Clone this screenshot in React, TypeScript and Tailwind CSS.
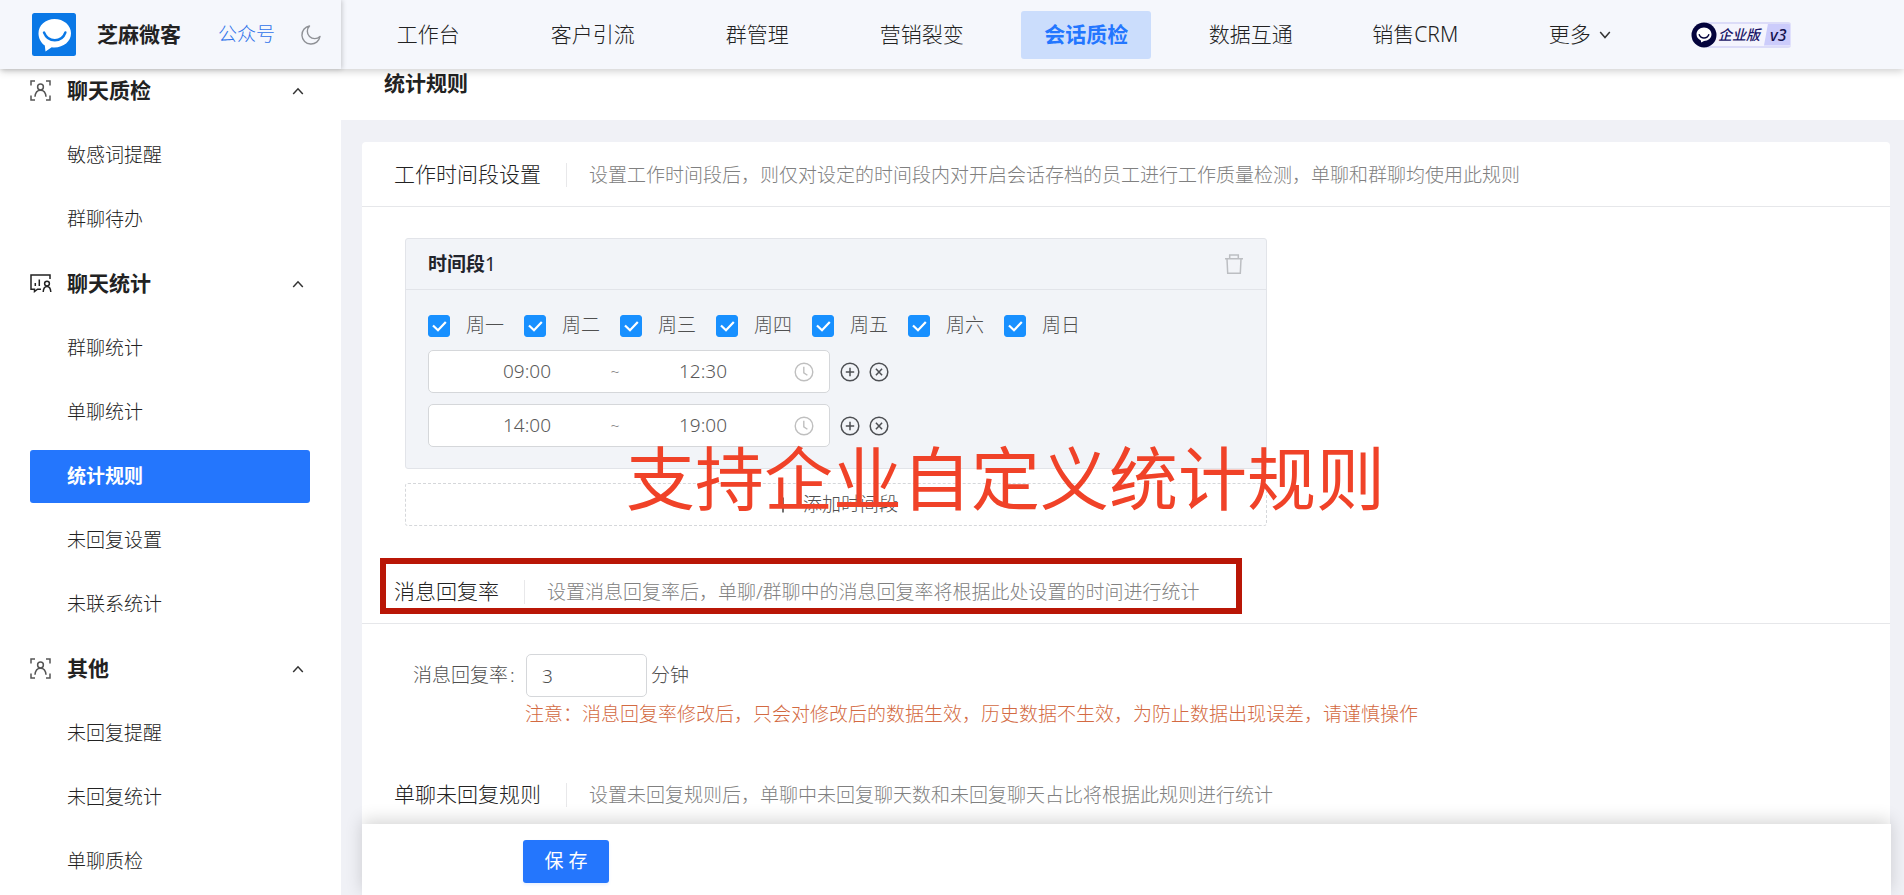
import { useState } from 'react';

type MenuGroup = { title: string; icon: 'scan' | 'stats'; items: string[] };

const navItems = ['工作台', '客户引流', '群管理', '营销裂变', '会话质检', '数据互通', '销售CRM'];

const menu: MenuGroup[] = [
  { title: '聊天质检', icon: 'scan', items: ['敏感词提醒', '群聊待办'] },
  { title: '聊天统计', icon: 'stats', items: ['群聊统计', '单聊统计', '统计规则', '未回复设置', '未联系统计'] },
  { title: '其他', icon: 'scan', items: ['未回复提醒', '未回复统计', '单聊质检'] },
];

const weekdays = ['周一', '周二', '周三', '周四', '周五', '周六', '周日'];

function Logo() {
  return (
    <svg viewBox="0 0 44 43" className="h-[43px] w-11 shrink-0" aria-hidden="true">
      <rect width="44" height="43" rx="2.5" fill="#0a78e6" />
      <path
        d="M22.5 6C31.6 6 39 12.2 39 20.3S31.6 34.5 22.5 34.5c-1 0-1.900 0-2.800-.2L13.500 38.500l-.7-6C9 29.800 6.500 25.500 6.500 20.500 6.500 12.400 13.400 6 22.500 6Z"
        fill="#fff"
      />
      <path d="M12 19.5c2 5 6 7.800 10.800 7.800s8.800-2.800 10.600-7.800" fill="none" stroke="#0a78e6" strokeWidth="2.4" strokeLinecap="round" />
    </svg>
  );
}

function MoonIcon() {
  return (
    <svg viewBox="0 0 20 20" className="size-5" fill="none" stroke="#8f9196" strokeWidth="1.4" strokeLinejoin="round" aria-hidden="true">
      <path d="M8.500 1A9.100 9.100 0 1 0 19 11.500 6.800 6.800 0 0 1 8.500 1Z" />
    </svg>
  );
}

function ScanUserIcon() {
  return (
    <svg viewBox="0 0 21 21" className="size-[21px]" fill="none" stroke="#555" strokeWidth="1.5" aria-hidden="true">
      <path d="M1 5.500V1h4M16 1h4v4.500M20 15.500V20h-4M5 20H1v-4.500" />
      <circle cx="10.5" cy="7" r="2.9" />
      <path d="M5 16.800c.3-3.800 2.300-6.600 5.500-6.600s5.200 2.800 5.500 6.600" />
    </svg>
  );
}

function StatsUserIcon() {
  return (
    <svg viewBox="0 0 22 19" className="h-[19px] w-[22px]" fill="none" stroke="#222" strokeWidth="1.5" aria-hidden="true">
      <path d="M20 5V1H1v14.200h3.500v2.300l3-2.300H11" />
      <path d="M5.300 9v3M9.300 5.500V12" />
      <circle cx="17" cy="9.6" r="2.4" />
      <path d="M13.200 18c.2-3.300 1.600-5.600 3.800-5.600s3.600 2.300 3.800 5.600" />
    </svg>
  );
}

function Chevron({ down = false }: { down?: boolean }) {
  return (
    <svg viewBox="0 0 12 8" className="h-2 w-3" fill="none" stroke="#333" strokeWidth="1.5" aria-hidden="true">
      <path d={down ? 'M1.200 1 6 6.500 10.800 1' : 'M1.200 7 6 1.800 10.800 7'} />
    </svg>
  );
}

function ClockIcon() {
  return (
    <svg viewBox="0 0 20 20" className="size-5 shrink-0" fill="none" stroke="#bfbfbf" strokeWidth="1.4" aria-hidden="true">
      <circle cx="10" cy="10" r="8.8" />
      <path d="M9.800 4.800v6l3.600 2.500" />
    </svg>
  );
}

function TrashIcon() {
  return (
    <svg viewBox="0 0 20 22" className="h-[22px] w-5" fill="none" stroke="#bcbec2" strokeWidth="1.5" aria-hidden="true">
      <path d="M1 5.800h18M5.700 5.500V2h8.600v3.500M3 6l.7 14.200h12.600L17 6" />
    </svg>
  );
}

function RoundIcon({ kind }: { kind: 'plus' | 'close' }) {
  return (
    <svg viewBox="0 0 20 20" className="size-5" fill="none" stroke="#4d4f53" strokeWidth="1.5" aria-hidden="true">
      <circle cx="10" cy="10" r="8.8" />
      <path d={kind === 'plus' ? 'M10 5.800v8.400M5.800 10h8.400' : 'M6.900 6.700l6.200 6.600M13.100 6.700l-6.200 6.600'} />
    </svg>
  );
}

function VersionBadge() {
  return (
    <a href="#version" aria-label="企业版 v3" className="flex h-[26px] items-center text-[#1a1668]">
      <svg viewBox="0 0 26 26" className="relative z-10 size-[26px] shrink-0" aria-hidden="true">
        <circle cx="13" cy="13" r="12.5" fill="#04043c" />
        <path d="M13 5.500c4.300 0 7.500 3 7.500 6.800s-3.200 6.700-7.500 6.700l-2.800 1.400-.3-2C7.200 17.300 5.500 15 5.500 12.300c0-3.800 3.200-6.800 7.500-6.800Z" fill="#fff" />
        <path d="M8 12.300c1 2.600 2.800 3.800 5 3.800s4-1.200 5-3.800" fill="none" stroke="#04043c" strokeWidth="1.5" />
      </svg>
      <span className="-ml-3 flex h-[26px] items-center overflow-hidden rounded-[3px] border-y-2 border-[#dcdcf8] bg-[#f4f4fd] pl-[13px] text-sm leading-none font-medium italic">
        <span>企业版</span>
        <span className="ml-1 flex h-full items-center bg-[#ccccfb] pr-1 pl-[6px] text-base text-[#15134f] [clip-path:polygon(4px_0,100%_0,100%_100%,0_100%)]">
          v3
        </span>
      </span>
    </a>
  );
}

function SectionHeader({ title, desc }: { title: string; desc: string }) {
  return (
    <div className="flex h-[65px] items-center border-b border-[#e6e7ea] pt-0.5 pl-8">
      <h2 className="text-[21px] text-[#222]">{title}</h2>
      <span className="ml-[25px] h-6 w-px bg-[#e8e8ea]" />
      <p className="ml-[22px] text-[19px] whitespace-nowrap text-[#808080]">{desc}</p>
    </div>
  );
}

function TimeRange({ start, end }: { start: string; end: string }) {
  return (
    <div className="flex items-center">
      <div className="flex h-[43px] w-[402px] items-center rounded-[5px] border border-[#d5d7da] bg-white px-[15px] text-[19px] text-[#595959]">
        <input aria-label="开始时间" defaultValue={start} className="w-[166px] bg-transparent text-center outline-none" />
        <span className="w-[10px] text-center text-base text-[#8c8c8c]">~</span>
        <input aria-label="结束时间" defaultValue={end} className="w-[166px] bg-transparent text-center outline-none" />
        <span className="ml-auto">
          <ClockIcon />
        </span>
      </div>
      <button type="button" aria-label="添加" className="ml-[10px]">
        <RoundIcon kind="plus" />
      </button>
      <button type="button" aria-label="移除" className="ml-[9px]">
        <RoundIcon kind="close" />
      </button>
    </div>
  );
}

export default function App() {
  const [checked, setChecked] = useState<boolean[]>(weekdays.map(() => true));
  const [rate, setRate] = useState('3');

  return (
    <div className="flex h-screen flex-col overflow-hidden bg-[#f0f1f6] font-['Noto_Sans','Noto_Sans_CJK_SC',sans-serif] font-light text-[#222]">
      <header className="relative z-20 flex h-[69px] shrink-0 bg-[#f5f7fc] shadow-[0_2px_8px_rgba(0,0,0,0.2)]">
        <div className="flex w-[341px] shrink-0 items-center pl-8 shadow-[1px_0_5px_rgba(0,0,0,0.2)]">
          <Logo />
          <span className="ml-[21px] text-[21px] font-bold">芝麻微客</span>
          <a href="#mp" className="ml-[37px] text-[19px] text-[#2f73ea]">
            公众号
          </a>
          <button type="button" aria-label="切换深色模式" className="ml-[26px]">
            <MoonIcon />
          </button>
        </div>
        <nav className="ml-[5px] grid max-w-[1316px] flex-1 grid-cols-8 items-center justify-items-center text-[21px]">
          {navItems.map((item) => (
            <a
              key={item}
              href={`#${item}`}
              className={
                item === '会话质检'
                  ? 'flex h-12 items-center rounded-[3px] bg-[#cbddfc] px-[23px] font-bold whitespace-nowrap text-[#2376ff]'
                  : 'flex h-12 items-center px-[23px] whitespace-nowrap'
              }
            >
              {item}
            </a>
          ))}
          <button type="button" className="flex h-12 items-center gap-2">
            更多
            <Chevron down />
          </button>
        </nav>
        <div className="ml-[29px] flex items-center">
          <VersionBadge />
        </div>
      </header>

      <div className="flex min-h-0 flex-1">
        <aside className="w-[341px] shrink-0 overflow-hidden bg-white pr-[31px] pl-[30px]">
          {menu.map((group, index) => (
            <section key={group.title} className={index === 0 ? '-mt-[11px]' : ''}>
              <button type="button" className="flex h-[65px] w-full items-center pr-[6px] text-left">
                <span className="flex w-[37px]">{group.icon === 'scan' ? <ScanUserIcon /> : <StatsUserIcon />}</span>
                <span className="flex-1 text-[21px] font-bold">{group.title}</span>
                <Chevron />
              </button>
              <ul>
                {group.items.map((item) => (
                  <li key={item} className="flex h-16 items-center">
                    <a
                      href={`#${item}`}
                      className={
                        item === '统计规则'
                          ? 'flex h-[53px] w-full items-center rounded-[3px] bg-[#2476fd] pl-[37px] text-[19px] font-bold text-white'
                          : 'flex h-[53px] w-full items-center pl-[37px] text-[19px]'
                      }
                    >
                      {item}
                    </a>
                  </li>
                ))}
              </ul>
            </section>
          ))}
        </aside>

        <div className="flex min-w-0 flex-1 flex-col">
          <div className="h-[51px] shrink-0 bg-white pl-[43px]">
            <h1 className="text-[21px] leading-7 font-bold">统计规则</h1>
          </div>

          <main className="min-h-0 flex-1 overflow-hidden pt-[22px] pr-[14px] pl-[21px]">
            <div className="relative h-full rounded-t-[4px] bg-white">
              <SectionHeader
                title="工作时间段设置"
                desc="设置工作时间段后，则仅对设定的时间段内对开启会话存档的员工进行工作质量检测，单聊和群聊均使用此规则"
              />
              <div className="px-[43px] pt-[31px] pb-[33px]">
                <div className="max-w-[862px] rounded-[3px] border border-[#e2e4e9] bg-[#f2f4f8] pb-[21px]">
                  <div className="flex h-[51px] items-center justify-between border-b border-[#e2e4e9] px-[22px]">
                    <h3 className="text-[19px] font-bold text-[#22242c]">
                      时间段<span className="font-normal">1</span>
                    </h3>
                    <button type="button" aria-label="删除时间段">
                      <TrashIcon />
                    </button>
                  </div>
                  <div className="flex flex-col gap-[11px] px-[22px] pt-[22px]">
                    <div className="flex h-[27px] gap-5">
                      {weekdays.map((day, i) => (
                        <label key={day} className="flex items-center gap-4 text-[19px] text-[#505050]">
                          <span className="relative flex">
                            <input
                              type="checkbox"
                              checked={checked[i]}
                              onChange={() => setChecked(checked.map((c, j) => (j === i ? !c : c)))}
                              className="peer size-[22px] appearance-none rounded-[3px] border border-[#c8cacd] bg-white checked:border-[#1890ff] checked:bg-[#1890ff]"
                            />
                            <svg
                              viewBox="0 0 22 22"
                              className="pointer-events-none absolute inset-0 size-[22px] opacity-0 peer-checked:opacity-100"
                              fill="none"
                              stroke="#fff"
                              strokeWidth="2.2"
                              aria-hidden="true"
                            >
                              <path d="M5 10.500 10 15.300 17.800 7" />
                            </svg>
                          </span>
                          {day}
                        </label>
                      ))}
                    </div>
                    <TimeRange start="09:00" end="12:30" />
                    <TimeRange start="14:00" end="19:00" />
                  </div>
                </div>
                <button
                  type="button"
                  className="mt-[14px] flex h-[43px] w-full max-w-[862px] items-center justify-center gap-[11px] rounded-[3px] border border-dashed border-[#d5d7da] text-[19px] text-[#505050]"
                >
                  <svg viewBox="0 0 18 18" className="size-[18px]" fill="none" stroke="#444" strokeWidth="1.5" aria-hidden="true">
                    <path d="M9 1.500v15M1.500 9h15" />
                  </svg>
                  添加时间段
                </button>
              </div>

              <div className="relative">
                <SectionHeader title="消息回复率" desc="设置消息回复率后，单聊/群聊中的消息回复率将根据此处设置的时间进行统计" />
                <div className="pointer-events-none absolute -top-px left-[18px] h-14 w-[862px] border-[6px] border-[#b91606]" />
              </div>
              <div className="pt-[30px] pb-[31px] pl-[51px] text-[19px]">
                <div className="flex items-center text-[#505050]">
                  <label htmlFor="reply-rate" className="w-[113px] whitespace-nowrap">
                    消息回复率<span className="ml-0.5">:</span>
                  </label>
                  <input
                    id="reply-rate"
                    value={rate}
                    onChange={(e) => setRate(e.target.value)}
                    className="h-[43px] w-[121px] rounded-[5px] border border-[#d5d7da] bg-white px-[15px] outline-none"
                  />
                  <span className="ml-1">分钟</span>
                </div>
                <p className="pl-[112px] leading-[34px] whitespace-nowrap text-[#d36a42]">
                  注意：消息回复率修改后，只会对修改后的数据生效，历史数据不生效，为防止数据出现误差，请谨慎操作
                </p>
              </div>

              <SectionHeader
                title="单聊未回复规则"
                desc="设置未回复规则后，单聊中未回复聊天数和未回复聊天占比将根据此规则进行统计"
              />

              <p className="pointer-events-none absolute top-[286px] left-[264px] text-[69px] leading-[100px] font-normal whitespace-nowrap text-[#f04228]">
                支持企业自定义统计规则
              </p>
            </div>
          </main>

          <footer className="relative z-10 mr-[13px] ml-[21px] flex h-[71px] shrink-0 items-start bg-white pt-4 pl-[161px] shadow-[0_-4px_16px_rgba(0,0,0,0.16)]">
            <button type="button" className="h-[43px] w-[86px] rounded-[3px] bg-[#2476fd] text-[19px] font-normal text-white shadow-[0_2px_3px_rgba(36,118,253,0.1)]">
              保 存
            </button>
          </footer>
        </div>
      </div>
    </div>
  );
}
